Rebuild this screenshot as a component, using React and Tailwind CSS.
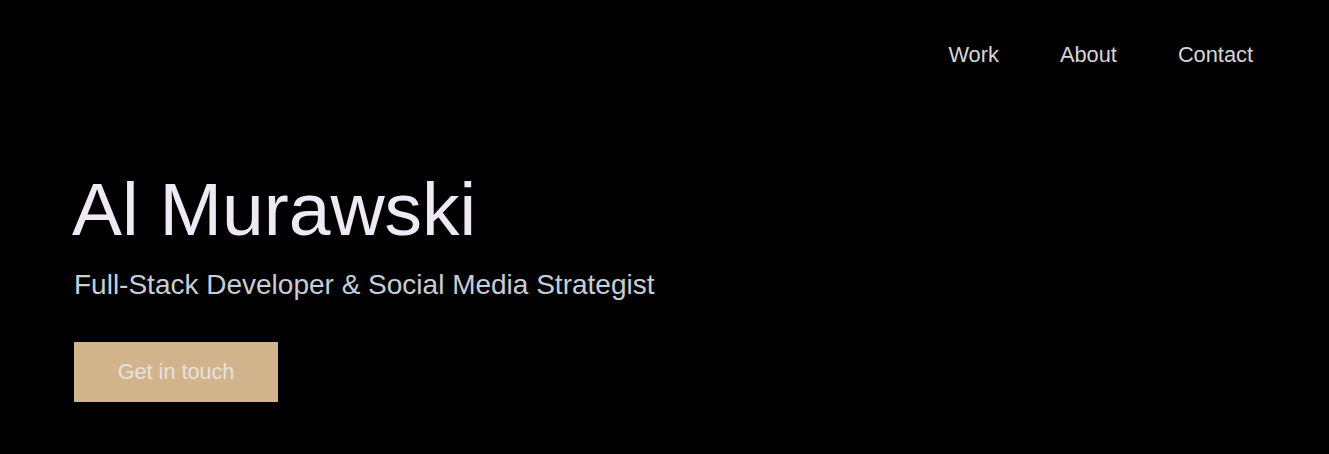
export default function App() {
  return (
    <div className="min-h-screen w-full bg-black" style={{ fontFamily: '"Liberation Sans", Arial, sans-serif' }}>
      <header className="flex justify-end pt-[41px] pr-[76px]">
        <nav className="flex gap-[61px] text-[21.8px] leading-[28px] text-[#d6d6d6]">
          <a href="#" className="block">Work</a>
          <a href="#" className="block">About</a>
          <a href="#" className="block">Contact</a>
        </nav>
      </header>
      <main className="pl-[74px] pt-[103px] pb-[52px]">
        <h1 className="text-[75px] leading-[75px] text-[#efe9f4] -ml-[2px]">Al Murawski</h1>
        <p className="mt-[24px] text-[28px] leading-[28px] text-[#c9cdd4]">Full-Stack Developer &amp; Social Media Strategist</p>
        <a href="#" className="mt-[43px] inline-block w-[204px] bg-[#d2b48c] py-[16px] text-center text-[21.6px] leading-[28px] text-[#e6e2de]">
          Get in touch
        </a>
      </main>
    </div>
  );
}
